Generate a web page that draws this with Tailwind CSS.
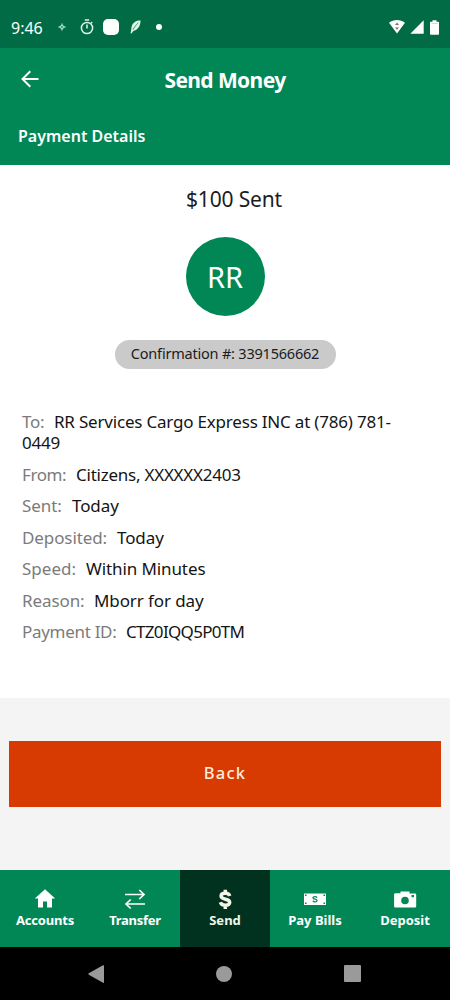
<!DOCTYPE html>
<html lang="en">
<head>
<meta charset="utf-8">
<title>Send Money</title>
<script src="https://cdn.jsdelivr.net/npm/@tailwindcss/browser@4"></script>
</head>
<body class="bg-[#f4f4f4] font-['Noto_Sans',sans-serif]">
<div class="flex h-[1000px] w-[450px] flex-col overflow-hidden">

  <!-- System status bar -->
  <div class="flex h-12 shrink-0 items-center bg-[#006b44] pt-[6px] pr-[11px] pl-[11px] text-white">
    <span class="w-[47px] pt-px text-[16px] leading-5">9:46</span>
    <svg class="h-[8px] w-[8px]" viewBox="0 0 8 8" fill="none" stroke="#9fdcbf" stroke-width="1.3"><path d="M4 .5v2M4 5.500v2M.5 4h2M5.500 4h2"/><circle cx="4" cy="4" r="1.500"/></svg>
    <svg class="ml-[14px] h-[16px] w-[14px]" viewBox="0 0 14 16" fill="none" stroke="#dff5ea" stroke-width="1.500"><circle cx="7" cy="9" r="5.600"/><path d="M7 5.500V9.500M4.800 1h4.400M11 4.300l1.200-1.200"/></svg>
    <span class="ml-[9px] h-4 w-4 rounded-[5px] bg-white"></span>
    <svg class="ml-[11px] h-[14px] w-[11px]" viewBox="0 0 11 14"><path fill="#dff5ea" d="M10.500.5C6.500.3 3 2.300 1.800 6 1.300 8 1.400 9.800.6 13.300l1 .2 1.400-2.300C8 9.900 10.700 5.500 10.500.5z"/><path stroke="#006b44" stroke-width=".7" fill="none" d="M3 9.800C4.300 7.200 6 4.900 8.300 2.900"/></svg>
    <span class="ml-[15px] h-[6px] w-[6px] rounded-full bg-white"></span>
    <svg class="ml-auto h-[14px] w-[16px]" viewBox="0 0 16 14"><path fill="#fff" d="M0 2.800C4.800-.9 11.200-.9 16 2.800L8 13.600z"/><path fill="#7d6f76" d="M8 2.600l2 2.400H6zM8 9.700L6 7.400h4z"/></svg>
    <svg class="ml-[5px] h-[14px] w-[14px]" viewBox="0 0 14 14"><path fill="#fff" d="M13.700.3v13.400H.3z"/></svg>
    <svg class="ml-[6px] h-[15px] w-[9px]" viewBox="0 0 9 15"><path fill="#fff" d="M2.500.3h4v1.500H8.200q.8 0 .8.800V14q0 .8-.8.800H.8Q0 14.800 0 14V2.600q0-.8.8-.8h1.700z"/><path stroke="#b9d8ca" stroke-width=".8" d="M1.500 3.500h6"/></svg>
  </div>

  <!-- App header -->
  <header class="h-[117px] shrink-0 bg-[#008755] text-white">
    <div class="grid h-16 grid-cols-[1fr_auto_1fr] items-center">
      <svg class="mb-[2px] ml-[21px] h-[18px] w-[18px]" viewBox="0 0 18 18" fill="none" stroke="currentColor" stroke-width="2"><path d="M17.500 9H1.700M9.300 1.200L1.500 9l7.800 7.800"/></svg>
      <h1 class="text-[21px] leading-7 font-bold tracking-[-0.6px]">Send Money</h1>
    </div>
    <h2 class="mt-3 ml-[18px] text-[16px] leading-6 font-semibold">Payment Details</h2>
  </header>

  <!-- Payment summary -->
  <main class="flex h-[533px] shrink-0 flex-col items-center bg-white text-[#1c1c1c]">
    <p class="mt-5 pl-[18px] text-[21px] leading-7 tracking-[-0.15px]">$100 Sent</p>
    <div class="mt-6 flex h-[79px] w-[79px] items-center justify-center rounded-full bg-[#008755] pb-px text-[29px] leading-none text-white">RR</div>
    <p class="mt-6 flex h-[29px] w-[221px] items-center justify-center rounded-full bg-[#cacaca] pb-[2px] text-[14.5px] tracking-[-0.21px]">Confirmation #: 3391566662</p>

    <div class="mt-[42px] flex w-full flex-col gap-[10.5px] pr-10 pl-[22px] text-[17px] leading-[21px] text-[#141414]">
      <p><span class="inline-block w-[32px] tracking-[-0.3px] text-[#7b7b7b]">To:</span><span class="tracking-[-0.2px]">RR Services Cargo Express INC at (786) 781-<br>0449</span></p>
      <p><span class="inline-block w-[54px] tracking-[-0.4px] text-[#7b7b7b]">From:</span><span class="tracking-[-0.24px]">Citizens, XXXXXX2403</span></p>
      <p><span class="inline-block w-[50px] tracking-[-0.1px] text-[#7b7b7b]">Sent:</span><span class="tracking-[-0.1px]">Today</span></p>
      <p><span class="inline-block w-[95px] tracking-[-0.1px] text-[#7b7b7b]">Deposited:</span><span class="tracking-[-0.1px]">Today</span></p>
      <p><span class="inline-block w-[64px] text-[#7b7b7b]">Speed:</span><span class="tracking-[-0.1px]">Within Minutes</span></p>
      <p><span class="inline-block w-[72px] tracking-[-0.1px] text-[#7b7b7b]">Reason:</span><span class="tracking-[-0.1px]">Mborr for day</span></p>
      <p><span class="inline-block w-[104px] tracking-[-0.3px] text-[#7b7b7b]">Payment ID:</span><span class="tracking-[-0.69px]">CTZ0IQQ5P0TM</span></p>
    </div>
  </main>

  <!-- Primary action -->
  <section class="flex-1 bg-[#f4f4f4] px-[9px] pt-[43px]">
    <button class="h-[66px] w-full bg-[#d83b01] pb-[2px] text-[16.5px] font-medium tracking-[1.2px] text-[#ffeede]">Back</button>
  </section>

  <!-- Tab bar -->
  <nav class="grid h-[77px] shrink-0 grid-cols-5 bg-[#008755] text-[13px] leading-[18px] font-bold text-white">
    <a class="flex flex-col items-center pt-[18px]">
      <svg class="h-[23px] w-[24px]" viewBox="0 .5 24 23" fill="currentColor"><path d="M12 1.800L22.200 11H19v9h-5v-6h-4v6H5v-9H1.800z"/></svg>
      <span class="tracking-[-0.2px]">Accounts</span>
    </a>
    <a class="flex flex-col items-center pt-[18px]">
      <svg class="h-[23px] w-[24px]" viewBox="0 0 24 23" fill="none" stroke="currentColor" stroke-width="1.700"><path d="M2 6.500h18.500M16.300 2l4.700 4.500-4.700 4.500M22 16H3.500M7.700 11.500L3 16l4.700 4.500"/></svg>
      <span class="tracking-[-0.3px]">Transfer</span>
    </a>
    <a class="flex flex-col items-center bg-[#00321f] pt-[18px] text-[#f3f5e8]">
      <svg class="h-[23px] w-[24px]" viewBox="0 0 24 23" fill="none" stroke="currentColor" stroke-width="3.500"><path d="M16.700 8C16.200 6.100 14.600 5.300 12.300 5.300c-2.500 0-4.200 1-4.200 2.700 0 4.300 8.600 2.200 8.600 6.300 0 2-1.900 3-4.400 3s-4.300-1-4.900-3M12.300 1.800v3.500M12.300 17.300v3.700"/></svg>
      <span>Send</span>
    </a>
    <a class="flex flex-col items-center pt-[18px]">
      <svg class="h-[23px] w-[24px]" viewBox="0 0 24 23"><path fill="currentColor" d="M1 5.500h22V17H1z"/><path fill="#008755" d="M2 6.500h1.500v1.500H2zM20.500 6.500h1.500v1.500h-1.500zM2 14.500h1.500v1.500H2zM20.500 14.500h1.500v1.500h-1.500z"/><path fill="none" stroke="#008755" stroke-width="1.300" d="M14 9.700c-.4-.8-1-1-2-1-2.800 0-2.500 2.200 0 2.500 2.900.4 2.600 2.700 0 2.700-1.200 0-1.800-.4-2.100-1.200"/></svg>
      <span>Pay Bills</span>
    </a>
    <a class="flex flex-col items-center pt-[18px]">
      <svg class="h-[23px] w-[24px]" viewBox="0 0 24 23"><path fill="currentColor" d="M7.500 3.500h9v2H22q1.200 0 1.200 1.200v11.500q0 1.200-1.200 1.200H2.300q-1.200 0-1.200-1.200V6.200q0-1 1.200-1H7.500z"/><circle cx="12" cy="12.500" r="3.800" fill="#008755"/><path fill="#008755" d="M18.500 7h2.500v2.200h-2.500z"/></svg>
      <span>Deposit</span>
    </a>
  </nav>

  <!-- System navigation -->
  <div class="flex h-[53px] shrink-0 items-center justify-between bg-black pr-[89px] pl-[88px] text-[#9a9a9a]">
    <svg class="h-[18px] w-[16px]" viewBox="0 0 16 18" fill="currentColor"><path d="M15 .2q1-.3 1 .6v16.400q0 .9-1 .6L.8 9.700q-1-.7 0-1.400z"/></svg>
    <span class="h-4 w-4 rounded-full bg-current"></span>
    <span class="h-[17px] w-[17px] rounded-[1px] bg-current"></span>
  </div>
</div>
</body>
</html>
